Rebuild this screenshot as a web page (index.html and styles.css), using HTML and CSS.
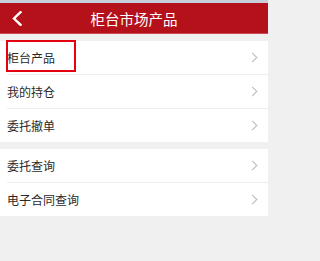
FILE: index.html
```html
<!DOCTYPE html>
<html lang="zh">
<head>
<meta charset="utf-8">
<link rel="stylesheet" href="styles.css">
</head>
<body>
<div class="page">
  <div class="status"></div>
  <header class="nav">
    <span class="back">
      <svg width="10" height="15" viewBox="0 0 10 15"><path d="M8.5 1.2 L2 7.5 L8.5 13.8" fill="none" stroke="#fff" stroke-width="2.4" stroke-linecap="square"/></svg>
    </span>
    <h1 class="title">柜台市场产品</h1>
  </header>
  <main class="content">
    <ul class="group">
      <li class="item selected"><span>柜台产品</span><i class="chev"></i></li>
      <li class="item"><span>我的持仓</span><i class="chev"></i></li>
      <li class="item"><span>委托撤单</span><i class="chev"></i></li>
    </ul>
    <ul class="group">
      <li class="item"><span>委托查询</span><i class="chev"></i></li>
      <li class="item"><span>电子合同查询</span><i class="chev"></i></li>
    </ul>
  </main>
</div>
</body>
</html>
```
FILE: styles.css
```css
html, body {
  margin: 0;
  padding: 0;
  height: 100%;
  background: #f0f0f0;
  font-family: "Noto Sans CJK SC", "Noto Sans", sans-serif;
}
.page {
  width: 268px;
  min-height: 100%;
  background: #f0f0f0;
}
.status {
  height: 3px;
  background: #c7cfdb;
}
.nav {
  height: 30px;
  background: #b5111a;
  border-bottom: 1px solid #c94a50;
  display: flex;
  align-items: center;
  justify-content: center;
  position: relative;
}
.back {
  position: absolute;
  left: 12px;
  top: 8px;
  display: flex;
}
.title {
  margin: 0;
  color: #fff;
  font-size: 14.5px;
  font-weight: normal;
  line-height: 1;
  padding-top: 3px;
}
.content {
  padding-top: 7px;
}
.group {
  list-style: none;
  margin: 0 0 7px 0;
  padding: 0 0 0 7px;
  background: #fff;
}
.item {
  height: 33px;
  display: flex;
  align-items: center;
  justify-content: space-between;
  border-bottom: 1px solid #eeeeee;
  padding-right: 11px;
  font-size: 12px;
  color: #2a2a2a;
  position: relative;
}
.item:last-child {
  border-bottom: none;
}
.selected::after {
  content: "";
  position: absolute;
  left: -1px;
  top: -1px;
  width: 66px;
  height: 28px;
  border: 2px solid #e50012;
}
.chev {
  width: 6px;
  height: 6px;
  border-top: 1px solid #b8b8b8;
  border-right: 1px solid #b8b8b8;
  transform: rotate(45deg);
  margin-right: 1px;
}
```
